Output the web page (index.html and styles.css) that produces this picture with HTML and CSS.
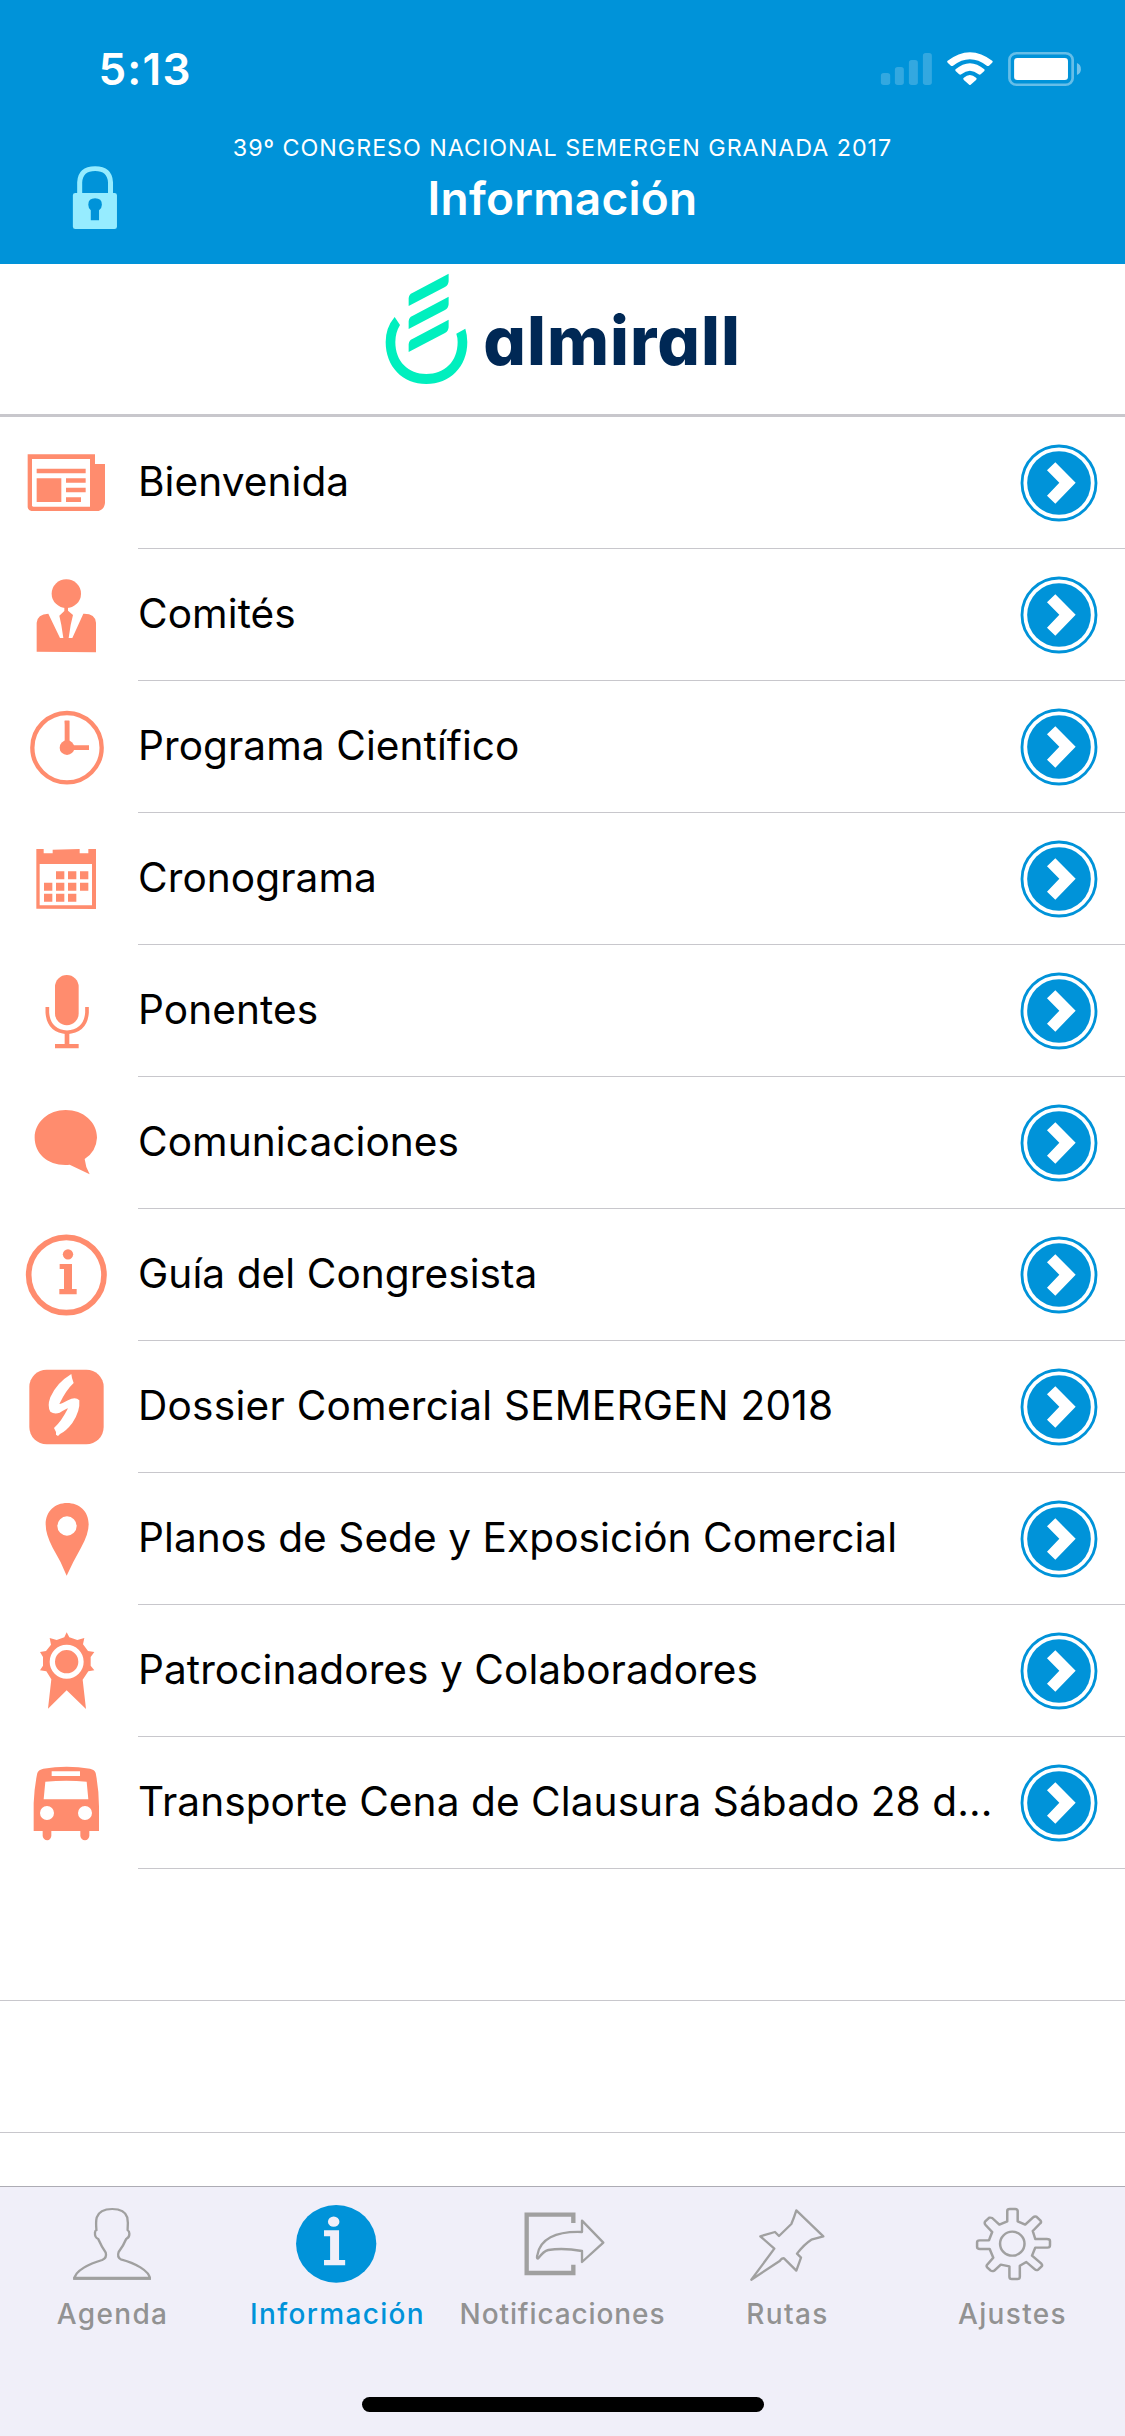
FILE: index.html
```html
<!DOCTYPE html>
<html lang="es">
<head>
<meta charset="utf-8">
<title>Información</title>
<link rel="stylesheet" href="styles.css">
</head>
<body>
<svg class="defs" aria-hidden="true">
  <symbol id="go" viewBox="462 -9 363 396" preserveAspectRatio="none">
    <circle cx="627" cy="189" r="111" fill="#fff" stroke="#0093d9" stroke-width="8.500"/>
    <circle cx="627" cy="189" r="95.500" fill="#0093d9"/>
    <path d="M616 127L677 188L616 251L591 227L628 188L591 151Z" fill="#fff"/>
  </symbol>
</svg>
<div class="screen">
  <header class="header">
    <div class="status">
      <span class="time">5:13</span>
      <svg class="indicators" viewBox="880 150 575 115" preserveAspectRatio="none">
        <g fill="#fff" fill-opacity=".2">
          <rect x="888" y="219" width="26" height="36" rx="8"/>
          <rect x="927" y="201" width="25" height="54" rx="8"/>
          <rect x="966" y="180" width="25" height="75" rx="8"/>
          <rect x="1005" y="159" width="25" height="96" rx="8"/>
        </g>
        <g fill="#fff">
          <path d="M1073 183Q1136 130 1199 183Q1200 186 1198 188L1189 197Q1186 199 1183 197Q1136 158 1089 197Q1086 199 1083 197L1074 188Q1072 186 1073 183Z"/>
          <path d="M1096 208Q1136 171 1176 208Q1178 210 1176 213L1166 223Q1163 225 1160 223Q1136 201 1112 223Q1109 225 1106 223L1096 213Q1094 210 1096 208Z"/>
          <path d="M1119 233Q1136 217 1153 233Q1157 236 1153 240L1138 254Q1136 256 1134 254L1119 240Q1115 236 1119 233Z"/>
          <rect x="1259" y="174" width="150" height="66" rx="9"/>
          <path d="M1434 189Q1445 194 1445 207Q1445 220 1434 225Z" fill-opacity=".45"/>
        </g>
        <rect x="1246" y="159.500" width="176" height="95" rx="20" fill="none" stroke="#fff" stroke-opacity=".4" stroke-width="7.500"/>
      </svg>
    </div>
    <div class="nav">
      <svg class="lock" viewBox="195 490 140 205" preserveAspectRatio="none" fill="#96ecff">
        <path d="M222 584V548Q224 507 265 507Q306 507 308 548V584" fill="none" stroke="#96ecff" stroke-width="14"/>
        <path fill-rule="evenodd" d="M210 580H319Q326 580 326 587V681Q326 688 319 688H210Q203 688 203 681V587Q203 580 210 580ZM253 662H276V632Q284 625 284 615Q284 596 265 596Q246 596 246 615Q246 625 253 632Z"/>
      </svg>
      <div class="titles">
        <div class="event">39º CONGRESO NACIONAL SEMERGEN GRANADA 2017</div>
        <h1 class="title">Información</h1>
      </div>
    </div>
  </header>

  <div class="sponsor">
    <svg class="mark" viewBox="60 30 280 360" preserveAspectRatio="none" fill="#00efbe">
      <path d="M146 138V115Q147 103 157 99L266 41V64Q265 76 255 81Z"/>
      <path d="M146 207V184Q147 172 157 168L266 110V133Q265 145 255 150Z"/>
      <path d="M146 276V253Q147 241 157 237L266 179V202Q265 214 255 219Z"/>
      <path d="M104 171Q77 203 77 246C77 320 128 372 199 372C270 372 322 320 322 246Q322 225 316 206L289 221Q293 232 293 246C293 305 254 342 199 342C145 342 106 305 106 246Q106 218 120 195Z"/>
    </svg>
    <span class="wordmark">almirall</span>
  </div>

  <main class="list">
    <div class="row">
      <svg class="icon" viewBox="0 -9 414 396" preserveAspectRatio="none"><path fill-rule="evenodd" d="M83 103H285V132H315V249Q313 268 296 273H94Q85 272 83 262ZM96 117V257Q97 260 101 260H270V117Z"/><path d="M110 146H257V160H110ZM110 175H184V246H110ZM198 175H257V188H198ZM198 203H257V217H198ZM198 232H243V246H198Z"/></svg>
      <div class="cell"><span class="label">Bienvenida</span><svg class="go"><use href="#go"/></svg></div>
    </div>
    <div class="row">
      <svg class="icon" viewBox="0 387 414 396" preserveAspectRatio="none"><ellipse cx="199" cy="521" rx="44" ry="43"/><path d="M193 560H204V572L219 585L212 615L206 654H217L250 581Q286 580 288 608V697L110 695V608Q112 583 145 581L180 654H190L184 615L178 587L193 573Z"/></svg>
      <div class="cell"><span class="label">Comités</span><svg class="go"><use href="#go"/></svg></div>
    </div>
    <div class="row">
      <svg class="icon" viewBox="0 783 414 396" preserveAspectRatio="none"><circle cx="201" cy="983" r="104" fill="none" stroke="#ff8c6e" stroke-width="13"/><circle cx="201" cy="983" r="22"/><path d="M194 902H208V976H267V990H201Z"/><path d="M194 902H208V983H194Z"/></svg>
      <div class="cell"><span class="label">Programa Científico</span><svg class="go"><use href="#go"/></svg></div>
    </div>
    <div class="row">
      <svg class="icon" viewBox="0 -21 414 396" preserveAspectRatio="none"><path fill-rule="evenodd" d="M109 87H131V100H158V89L239 87V100H265V87H288V267L109 266ZM119 132V256H276V132Z"/><path d="M168 154h25v24h-25zM204 154h25v24h-25zM240 154h25v24h-25zM132 188h25v24h-25zM168 188h25v24h-25zM204 188h25v24h-25zM240 188h25v24h-25zM132 221h25v24h-25zM168 221h25v24h-25zM204 221h25v24h-25z"/></svg>
      <div class="cell"><span class="label">Cronograma</span><svg class="go"><use href="#go"/></svg></div>
    </div>
    <div class="row">
      <svg class="icon" viewBox="0 375 414 396" preserveAspectRatio="none"><rect x="165" y="465" width="71" height="151" rx="35.500"/><path d="M142 561V578Q146 633 201 637Q257 633 261 578V561" fill="none" stroke="#ff8c6e" stroke-width="11"/><path d="M194 637H208V672H236V685H165V672H194Z"/></svg>
      <div class="cell"><span class="label">Ponentes</span><svg class="go"><use href="#go"/></svg></div>
    </div>
    <div class="row">
      <svg class="icon" viewBox="0 771 414 396" preserveAspectRatio="none"><path d="M197 870C250 870 291 906 291 953Q289 994 254 1017Q256 1040 269 1063L209 1034C148 1040 104 1003 104 953C104 906 146 870 197 870Z"/></svg>
      <div class="cell"><span class="label">Comunicaciones</span><svg class="go"><use href="#go"/></svg></div>
    </div>
    <div class="row">
      <svg class="icon" viewBox="0 27 414 396" preserveAspectRatio="none"><circle cx="199" cy="225" r="113" fill="none" stroke="#ff8c6e" stroke-width="17"/><circle cx="204" cy="163" r="15.500"/><path d="M179 192H216V267H230V283H178V267H192V207H179Z"/></svg>
      <div class="cell"><span class="label">Guía del Congresista</span><svg class="go"><use href="#go"/></svg></div>
    </div>
    <div class="row">
      <svg class="icon" viewBox="0 423 414 396" preserveAspectRatio="none"><rect x="88" y="509" width="223" height="224" rx="52"/><path fill="#fff" d="M214 522L216 534L221 549Q198 570 178 612Q185 612 204 601Q226 589 238 601Q241 634 217 669Q198 694 180 702L174 708L168 704V696L162 684Q184 665 204 625Q197 627 179 638Q163 644 151 635Q141 619 151 592Q169 549 214 522Z"/></svg>
      <div class="cell"><span class="label wide">Dossier Comercial SEMERGEN 2018</span><svg class="go"><use href="#go"/></svg></div>
    </div>
    <div class="row">
      <svg class="icon" viewBox="0 819 414 396" preserveAspectRatio="none"><path fill-rule="evenodd" d="M200 1127Q184 1086 158 1043Q137 1004 137 973C137 934 165 909 201 909C238 909 266 934 266 973Q266 1003 243 1043Q218 1087 200 1127ZM201 949A29 29 0 1 0 201 1007A29 29 0 1 0 201 949Z"/></svg>
      <div class="cell"><span class="label">Planos de Sede y Exposición Comercial</span><svg class="go"><use href="#go"/></svg></div>
    </div>
    <div class="row">
      <svg class="icon" viewBox="0 15 414 396" preserveAspectRatio="none"><path d="M200 97L208 112L232 120L253 114L249 133L264 153L283 156L272 171V197L283 211L265 214L248 239L258 327L200 271L144 326L154 238L139 214L120 211L129 197V171L120 156L138 153L153 134L149 114L170 120L193 112Z"/><circle cx="200" cy="185" r="43" fill="none" stroke="#fff" stroke-width="16"/></svg>
      <div class="cell"><span class="label">Patrocinadores y Colaboradores</span><svg class="go"><use href="#go"/></svg></div>
    </div>
    <div class="row">
      <svg class="icon" viewBox="0 411 414 396" preserveAspectRatio="none"><path fill-rule="evenodd" d="M112 519Q116 509 130 506Q200 495 270 506Q284 509 287 519Q297 570 297 620V693H268V708Q266 720 255 721Q243 720 241 708V693H154V708Q152 720 142 721Q130 720 128 708V693H101V610Q103 560 112 519ZM155 514V528H240V514ZM136 545L131 598H265L260 545Q200 540 136 545ZM141 618A21 21 0 1 0 141 660A21 21 0 1 0 141 618ZM255 618A21 21 0 1 0 255 660A21 21 0 1 0 255 618Z"/></svg>
      <div class="cell"><span class="label">Transporte Cena de Clausura Sábado 28 d...</span><svg class="go"><use href="#go"/></svg></div>
    </div>
    <div class="row empty"></div>
    <div class="row empty"></div>
  </main>

  <nav class="tabs">
    <div class="tab">
      <svg class="tab-icon" viewBox="0 51 627.750 300" preserveAspectRatio="none" fill="none" stroke="#a0a0a0" stroke-width="6.500"><path d="M208 326C210 301 250 281 285 270Q299 263 295 248Q284 231 274 207Q264 203 265 188Q265 182 269 180Q267 155 270 142Q278 117 313 117Q348 117 355 142Q358 157 356 180Q361 184 361 191Q361 203 352 207Q344 228 331 246Q326 261 337 268C376 279 417 302 418 326Z"/><path d="M204 325H421" stroke-width="9"/></svg>
      <span class="tab-label">Agenda</span>
    </div>
    <div class="tab active">
      <svg class="tab-icon" viewBox="627.750 51 627.750 300" preserveAspectRatio="none"><ellipse cx="938" cy="221.500" rx="112" ry="116.500" fill="#0093d9"/><ellipse cx="931" cy="155" rx="16" ry="15.500" fill="#f0eff9"/><path fill="#f0eff9" d="M904 181H946V270H963V286H904V270H921V199H904Z"/></svg>
      <span class="tab-label">Información</span>
    </div>
    <div class="tab">
      <svg class="tab-icon" viewBox="-180 -24 675 300" preserveAspectRatio="none" fill="none" stroke="#a0a0a0" stroke-width="7"><path d="M190 84V59H50V234H190V209" stroke-width="13"/><path d="M216 77L280 143L216 201V168Q160 158 115 165Q101 168 84 191Q79 190 82 181C89 133 136 108 216 111Z" stroke-linejoin="round"/></svg>
      <span class="tab-label long">Notificaciones</span>
    </div>
    <div class="tab">
      <svg class="tab-icon" viewBox="495 -24 675 300" preserveAspectRatio="none" fill="none" stroke="#a0a0a0" stroke-width="7" stroke-linejoin="round"><path d="M859 46L940 124L904 134Q882 148 861 176L873 188L859 227L822 190Q816 188 809 198L724 254L793 161L751 124L795 111L807 123L844 87Q852 68 859 46Z"/></svg>
      <span class="tab-label">Rutas</span>
    </div>
    <div class="tab">
      <svg class="tab-icon" viewBox="941.300 51 626.600 300" preserveAspectRatio="none" fill="none" stroke="#a0a0a0" stroke-width="7" stroke-linejoin="round"><path d="M1240 154V123Q1240 117 1247 117H1262Q1269 117 1269 123V154L1290 164L1312 142Q1316 138 1321 140L1332 151Q1336 156 1332 160L1311 183L1318 207H1350Q1359 207 1359 213V226Q1359 233 1352 233H1318L1309 257L1335 281Q1339 286 1335 290L1326 299Q1321 302 1317 298L1293 276L1275 287V320Q1275 327 1268 327H1253Q1246 327 1246 320V289L1222 284L1204 302Q1198 305 1194 302L1184 292Q1181 288 1184 284L1201 263L1191 237H1164Q1156 237 1156 231V217Q1156 211 1163 211H1189L1198 186L1179 164Q1176 160 1178 155L1190 143Q1194 142 1198 144L1218 164Z"/><ellipse cx="1254" cy="221" rx="34" ry="36"/></svg>
      <span class="tab-label">Ajustes</span>
    </div>
    <div class="home-bar"></div>
  </nav>
</div>
</body>
</html>
```
FILE: styles.css
```css
* { box-sizing: border-box; }
body { margin: 0; background: #fff; font-family: Inter, "Liberation Sans", sans-serif; color: #000; }
svg { display: block; flex: none; }
.defs { position: absolute; width: 0; height: 0; }
.screen { display: flex; flex-direction: column; width: 1125px; height: 2436px; overflow: hidden; }

.header { flex: none; height: 264px; background: #0093d9; color: #fff; }
.status { display: flex; justify-content: space-between; height: 132px; padding: 50px 40.5px 0 98.5px; }
.time { font-size: 44px; font-weight: 600; letter-spacing: 1.2px; line-height: 38px; }
.indicators { width: 206.5px; height: 38.3px; }
.nav { display: grid; grid-template-columns: 231px 1fr 231px; height: 132px; }
.lock { width: 50.2px; height: 68.3px; margin: 31.3px 0 0 69.9px; }
.titles { text-align: center; white-space: nowrap; }
.event { font-size: 23.3px; letter-spacing: 0.96px; line-height: 32px; }
.title { margin: 4px 0 0; font-size: 46px; font-weight: 600; letter-spacing: 0.24px; line-height: 61px; }

.sponsor { display: flex; flex: none; height: 153px; padding: 6px 0 0 380px; border-bottom: 3px solid #c8c7cc; }
.mark { width: 93.3px; height: 120px; }
.wordmark { margin-left: 10px; color: #002855; font-size: 67px; font-weight: 800; letter-spacing: 1px; line-height: 142px; font-feature-settings: "cv11"; }

.list { flex: 1; min-height: 0; overflow: hidden; }
.row { display: flex; height: 132px; }
.icon { width: 138px; height: 132px; fill: #ff8c6e; }
.cell { display: flex; flex: 1; justify-content: space-between; border-bottom: 1px solid #c8c7cc; }
.label { font-size: 40.6px; letter-spacing: 0.07px; line-height: 130px; white-space: nowrap; }
.label.wide { letter-spacing: 0.25px; }
.go { width: 121px; height: 132px; margin-left: -20px; }
.row.empty { border-bottom: 1px solid #c8c7cc; }

.tabs { display: grid; flex: none; grid-template-columns: repeat(5, 225px); grid-template-rows: 210px 15px; height: 250px; border-top: 1px solid #adacb4; background: #f0eff9; }
.tab { color: #929292; text-align: center; }
.tab.active { color: #0093d9; }
.tab-icon { width: 225px; height: 100px; }
.tab-label { display: block; font-size: 28px; font-weight: 500; letter-spacing: 1.35px; line-height: 55px; white-space: nowrap; }
.tab-label.long { letter-spacing: 0.9px; }
.home-bar { grid-column: 1 / -1; justify-self: center; width: 402px; height: 15px; border-radius: 8px; background: #000; }
```
